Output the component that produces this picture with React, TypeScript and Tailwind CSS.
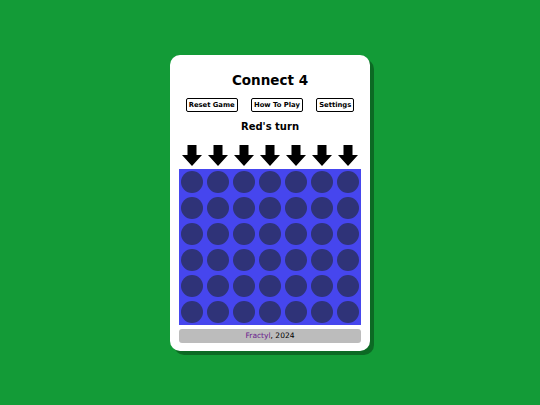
// @ts-nocheck
import React from 'react';

const COLS = 7;
const ROWS = 6;

function DropArrow() {
    return (
        <svg width="20" height="21" viewBox="0 0 20 21" className="block">
            <path d="M5.5 0 H14.5 V10 H20 L10 21 L0 10 H5.5 Z" fill="#000" />
        </svg>
    );
}

export default function App() {
    const board = Array.from({ length: ROWS }, () => Array(COLS).fill(null));

    return (
        <div className="min-h-[405px] w-full bg-[#139b37] flex items-center justify-center font-['DejaVu_Sans',Verdana,sans-serif]">
            <div className="w-[200px] bg-white rounded-[10px] shadow-[4px_4px_0_#0c6a24] px-[9px] pt-[15px] pb-[8px] flex flex-col items-center">
                <h1 className="text-[13.5px] font-bold leading-[20px] text-black">Connect 4</h1>

                <div className="w-full flex justify-around mt-[8px]">
                    <button className="text-[6.8px] font-bold leading-[10px] border border-black rounded-[2px] px-[2px] py-[1px] bg-white text-black">Reset Game</button>
                    <button className="text-[6.8px] font-bold leading-[10px] border border-black rounded-[2px] px-[2px] py-[1px] bg-white text-black">How To Play</button>
                    <button className="text-[6.8px] font-bold leading-[10px] border border-black rounded-[2px] px-[2px] py-[1px] bg-white text-black">Settings</button>
                </div>

                <p className="text-[10px] font-bold leading-[14px] mt-[8px] text-black">Red's turn</p>

                <div className="w-[182px] grid grid-cols-7 mt-[11px] mb-[3px]">
                    {Array.from({ length: COLS }).map((_, i) => (
                        <div key={i} className="flex justify-center">
                            <DropArrow />
                        </div>
                    ))}
                </div>

                <div className="w-[182px] h-[156px] bg-[#4646ee] grid grid-cols-7 grid-rows-6">
                    {board.map((row, r) =>
                        row.map((_, c) => (
                            <div key={r + '-' + c} className="flex items-center justify-center">
                                <div className="w-[22px] h-[22px] rounded-full bg-[#2f3378]" />
                            </div>
                        ))
                    )}
                </div>

                <div className="w-[182px] mt-[4px] h-[14px] bg-[#bcbcbc] rounded-[3px] flex items-center justify-center text-[7.5px] text-black">
                    <span><a className="text-[#6a1b8e]">Fractyl</a>, 2024</span>
                </div>
            </div>
        </div>
    );
}
